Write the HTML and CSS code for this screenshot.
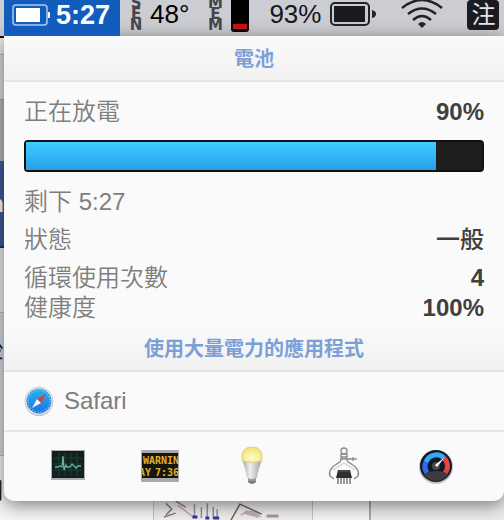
FILE: index.html
```html
<!DOCTYPE html>
<html lang="zh-Hant">
<head>
    <meta charset="UTF-8">
    <meta name="viewport" content="width=device-width, initial-scale=1.0">
    <title>電池</title>
    <link rel="stylesheet" href="styles.css">
</head>
<body>
    <!-- Windows behind the menu -->
    <div class="desktop" aria-hidden="true">
        <div class="band band-title"></div>
        <div class="band band-tabs"></div>
        <div class="band band-toolbar"></div>
        <div class="band band-blue"><span>n</span></div>
        <div class="band band-light"></div>
        <div class="band band-side"><span>後</span></div>
        <div class="band band-page">
            <span>用</span>
            <svg class="figure" viewBox="0 0 160 65" preserveAspectRatio="xMidYMax slice">
                <g fill="none" stroke-width="1.5">
                    <path d="M12 48l6 6-6 6M10 62l12-4M22 46l10 6" stroke="#8c7c84"/>
                    <path d="M24 50l16 12M88 60q10-8 20 2" stroke="#c9a9b1"/>
                    <path d="M41 49v14M48 52v11M54 48v16M60 52v12M64 54v10" stroke="#8f90ac"/>
                    <path d="M39 62h5M52 63h4M60 63h6" stroke="#3434a0" stroke-width="3"/>
                    <path d="M78 65l9-16 22 10" stroke="#705f5f"/>
                    <path d="M92 57l14 4" stroke="#c4b0b4" stroke-width="4"/>
                    <path d="M114 61h12" stroke="#a09a9c" stroke-width="3"/>
                </g>
            </svg>
        </div>
    </div>

    <header class="menubar">
        <button class="menu-item active" type="button">
            <svg width="38" height="22" viewBox="0 0 38 22" aria-hidden="true">
                <rect x="1" y="1" width="34" height="20" rx="3" fill="none" stroke="#a8cbf2" stroke-width="1.5"/>
                <rect x="4" y="4" width="24" height="14" fill="#fff"/>
                <path d="M36 8h1q1 0 1 1v4q0 1-1 1h-1z" fill="#fff"/>
            </svg>
            <span>5:27</span>
        </button>
        <div class="menu-item sensor">
            <span class="stack">S<br>E<br>N</span>
            <span>48°</span>
        </div>
        <div class="menu-item memory">
            <span class="stack">M<br>E<br>M</span>
            <span class="mem-gauge"></span>
        </div>
        <div class="menu-item charge">
            <span>93%</span>
            <svg width="46" height="24" viewBox="0 0 46 24" aria-hidden="true">
                <rect x="1" y="1" width="38" height="22" rx="4" fill="none" stroke="#222327" stroke-width="2"/>
                <rect x="4" y="4" width="31" height="16" fill="#1a1b20"/>
                <path d="M42 8q4 1 4 4t-4 4z" fill="#222327"/>
            </svg>
        </div>
        <div class="menu-item">
            <svg width="42" height="30" viewBox="0 0 42 30" aria-hidden="true">
                <g fill="none" stroke="#222327" stroke-width="2.5">
                    <path d="M1 9Q21-7 41 9"/>
                    <path d="M7 15Q21 4 35 15"/>
                    <path d="M12 21Q21 13 30 21"/>
                </g>
                <path d="M17 25q4-4 8 0l-4 4z" fill="#222327"/>
            </svg>
        </div>
        <div class="menu-item input-source">注</div>
    </header>

    <main class="panel">
        <h1 class="section-title">電池</h1>
        <section class="details">
            <dl class="row row-main">
                <dt>正在放電</dt>
                <dd>90%</dd>
            </dl>
            <div class="bar" role="progressbar" aria-label="電池" aria-valuenow="90" aria-valuemin="0" aria-valuemax="100">
                <div class="bar-fill" style="width: 90%"></div>
            </div>
            <p class="row remaining">剩下 5:27</p>
            <dl class="row">
                <dt>狀態</dt>
                <dd class="state">一般</dd>
            </dl>
            <div class="health">
                <dl class="row row-tight">
                    <dt>循環使用次數</dt>
                    <dd>4</dd>
                </dl>
                <dl class="row row-tight">
                    <dt>健康度</dt>
                    <dd>100%</dd>
                </dl>
            </div>
        </section>

        <h2 class="section-title">使用大量電力的應用程式</h2>
        <div class="app">
            <svg width="30" height="30" viewBox="0 0 30 30" aria-hidden="true">
                <defs>
                    <linearGradient id="compass" x2="0" y2="1">
                        <stop offset="0" stop-color="#2bb4f2"/>
                        <stop offset="1" stop-color="#1c72dd"/>
                    </linearGradient>
                </defs>
                <circle cx="15" cy="16" r="14" fill="#b4b4b6"/>
                <circle cx="15" cy="15" r="14" fill="#ececee" stroke="#cfcfd1"/>
                <circle cx="15" cy="15" r="12.5" fill="url(#compass)"/>
                <circle cx="15" cy="15" r="11" fill="none" stroke="#8fcbf5" stroke-width="1.5" stroke-dasharray="1 1.9"/>
                <path d="M22 8l-9 5 4 4z" fill="#e23b36"/>
                <path d="M8 22l5-9 4 4z" fill="#f5f5f5"/>
            </svg>
            <span>Safari</span>
        </div>

        <nav class="tools">
            <button type="button" aria-label="Activity Monitor">
                <svg width="40" height="40" viewBox="0 0 40 40">
                    <rect x="3" y="5" width="34" height="30" fill="#a9afaf"/>
                    <rect x="4" y="6" width="32" height="27" fill="#161c1d"/>
                    <rect x="6" y="8" width="28" height="23" fill="#11231f"/>
                    <path d="M11 8v23M17 8v23M23 8v23M29 8v23M6 13h28M6 19h28M6 25h28" stroke="#203d37"/>
                    <path d="M7 22h3l2-1 2 1 1-11 1 14 2-5 1 2h3l2-3 2 2 2 2 2-2h3" fill="none" stroke="#5fb5a0" stroke-width="1.3"/>
                </svg>
            </button>
            <button type="button" aria-label="Console">
                <svg width="40" height="40" viewBox="0 0 40 40">
                    <defs>
                        <clipPath id="led"><rect x="2" y="7" width="36" height="27"/></clipPath>
                    </defs>
                    <rect x="1" y="5" width="38" height="32" rx="1" fill="#aaa9ad"/>
                    <rect x="2" y="8" width="36" height="25" fill="#17150f"/>
                    <g class="led-text" clip-path="url(#led)">
                        <text x="3" y="19">WARNIN</text>
                        <text x="-1" y="31">AY</text>
                        <text x="15" y="31">7:36</text>
                    </g>
                </svg>
            </button>
            <button type="button" aria-label="Energy Saver">
                <svg width="40" height="40" viewBox="0 0 40 40">
                    <defs>
                        <radialGradient id="glow" cy=".65">
                            <stop offset="0" stop-color="#fffcd0"/>
                            <stop offset="1" stop-color="#f5e77c"/>
                        </radialGradient>
                        <linearGradient id="metal">
                            <stop offset="0" stop-color="#a2a5ab"/>
                            <stop offset=".4" stop-color="#eeeef0"/>
                            <stop offset="1" stop-color="#9ea1a7"/>
                        </linearGradient>
                    </defs>
                    <path d="M16 31h8v6q-4 4-8 0z" fill="#777c83"/>
                    <path d="M16 35h8" stroke="#b6bac0"/>
                    <path d="M10 15q3 7 5 18 5 2 10 0 2-11 5-18z" fill="url(#metal)"/>
                    <path d="M10 16Q8 2 20 2t10 14q-10 3-20 0z" fill="url(#glow)" stroke="#d3c287" stroke-width=".7"/>
                </svg>
            </button>
            <button type="button" aria-label="System Information">
                <svg width="40" height="40" viewBox="0 0 40 40">
                    <g fill="none" stroke="#8a8a8c" stroke-width="1.3">
                        <circle cx="20" cy="6" r="3"/>
                        <path d="M17 9h6v3h-6zM18 12l-2 5Q3 24 6 31l4 3M22 12l2 5q13 7 10 14l-4 3M16 14h17M29 12v4"/>
                        <path d="M9 25l11-7 11 7" stroke="#d2d2d3"/>
                    </g>
                    <path d="M14 25h12l2 8H12z" fill="#2d2d2f"/>
                    <path d="M15 26h10" stroke="#626264"/>
                    <path d="M14 33v6M17 33v6M20 33v6M23 33v6M26 33v6" stroke="#777779" stroke-width="1.5"/>
                </svg>
            </button>
            <button type="button" aria-label="iStat Menus">
                <svg width="40" height="40" viewBox="0 0 40 40">
                    <defs>
                        <clipPath id="dial"><circle cx="20" cy="21" r="15"/></clipPath>
                    </defs>
                    <circle cx="20" cy="22" r="17" fill="#c3c3c6"/>
                    <circle cx="20" cy="21" r="16" fill="#14182b"/>
                    <g fill="none" stroke-width="5">
                        <path d="M11 28A11 11 0 0 1 10 17" stroke="#3269f0"/>
                        <path d="M10 17A11 11 0 0 1 28 13" stroke="#35a9f5"/>
                        <path d="M28 13A11 11 0 0 1 29 28" stroke="#e8433d"/>
                    </g>
                    <ellipse cx="20" cy="34" rx="15" ry="8" fill="#3d3d40" clip-path="url(#dial)"/>
                    <circle cx="20" cy="21" r="4" fill="#4b4a48"/>
                    <path d="M19 20l10-8-8 10z" fill="#fff"/>
                </svg>
            </button>
        </nav>
    </main>
</body>
</html>
```
FILE: styles.css
```css
* { box-sizing: border-box; }
body {
    margin: 0;
    min-height: 100vh;
    position: relative;
    overflow: hidden;
    font-family: "Liberation Sans", "Noto Sans CJK TC", sans-serif;
    font-size: 24px;
    color: #7e7e7e;
}
h1, h2, p, dl, dd { margin: 0; }
button {
    border: none;
    padding: 0;
    background: none;
    font: inherit;
    cursor: pointer;
}
svg { display: block; flex: none; }

/* desktop behind the panel */
.desktop {
    position: absolute;
    inset: 0;
    z-index: -1;
    display: flex;
    flex-direction: column;
    padding-top: 36px;
    background: #e2e2e2;
    color: #222;
}
.band { overflow: hidden; display: flex; align-items: center; }
.band span { width: 4px; display: flex; justify-content: flex-end; }
.band-title { height: 18px; background: #ececec; border-top: 2px solid #111; }
.band-tabs { height: 45px; background: #dcdcdc; border-top: 1px solid #bbb; }
.band-toolbar { height: 62px; background: #bab7b7; border-top: 1px solid #999; }
.band-blue { height: 87px; background: #3f5c9a; border-bottom: 2px solid #1d2e5c; color: #fff; font-weight: bold; }
.band-light { height: 64px; background: #ebebeb; }
.band-side { height: 143px; background: #d9dbe2; border-top: 1px solid #bbb; align-items: flex-start; padding-top: 16px; }
.band-page {
    flex: 1;
    background: linear-gradient(90deg, #f6f6f6 369px, #aaa 369px, #aaa 371px, #ececec 371px);
    border-top: 1px solid #bbb;
}
.figure {
    width: 160px;
    height: 100%;
    margin-left: 149px;
    background: #f1eeee;
    border: solid #c4c4c4;
    border-width: 0 1px;
}

/* menu bar */
.menubar {
    display: flex;
    height: 36px;
    padding-left: 4px;
    background: #cccdd2;
    color: #16171b;
    font-size: 26px;
    line-height: 28px;
    overflow: hidden;
}
.menu-item {
    display: flex;
    align-items: center;
    height: 28px;
}
.menu-item.active {
    height: 36px;
    padding: 0 10px 6px 8px;
    gap: 6px;
    background: #125dbb;
    color: #fff;
    font-size: 27px;
    font-weight: bold;
}
.sensor { margin-left: 8px; gap: 6px; color: #000; }
.memory { margin-left: 18px; gap: 8px; }
.charge { margin-left: 20px; gap: 9px; margin-right: 25px; }
.stack {
    width: 16px;
    font: bold 15px/11px "DejaVu Sans", sans-serif;
    text-align: center;
    color: #45464a;
}
.mem-gauge {
    width: 18px;
    height: 32px;
    margin-top: 4px;
    background: #c60d12;
    border: solid #000;
    border-width: 24px 2px 3px;
    border-radius: 0 0 3px 3px;
}
.input-source {
    justify-content: center;
    width: 32px;
    height: 30px;
    margin-left: 24px;
    border-radius: 4px;
    background: #1a1b20;
    color: #e4e4e8;
    font-size: 24px;
}

/* battery panel */
.panel {
    margin-left: 4px;
    background: #fafafa;
    border-radius: 0 0 10px 10px;
    box-shadow: 0 4px 18px rgba(0,0,0,0.5);
    overflow: hidden;
}
.section-title {
    height: 46px;
    border-bottom: 2px solid #e5e5e5;
    background: linear-gradient(#fafafa, #f1f1f1);
    color: #7b9fd6;
    font-size: 20px;
    font-weight: bold;
    line-height: 46px;
    text-align: center;
}
.details { padding: 0 20px 3px; }
.row {
    display: flex;
    justify-content: space-between;
    align-items: center;
    height: 38px;
    line-height: 30px;
    font-weight: 350;
}
.row dd { color: #404040; font-weight: bold; }
.row .state { font-weight: 500; }
.row-main { height: 58px; padding-top: 2px; }
.row-tight { height: 30px; }
.remaining { margin-top: 11px; }
.health { margin-top: 4px; }
.bar {
    height: 32px;
    border: 2px solid #111;
    border-radius: 4px;
    background: #1e1e1e;
}
.bar-fill {
    height: 100%;
    background: linear-gradient(#3fcdff, #35b5f9 50%, #289fe6);
}
.app {
    display: flex;
    align-items: center;
    gap: 10px;
    height: 60px;
    padding: 0 20px;
    border-bottom: 2px solid #e5e5e5;
}
.tools {
    display: grid;
    grid-template-columns: repeat(5, 1fr);
    justify-items: center;
    padding: 13px 22px 16px 18px;
}
.led-text {
    font: bold 10px "DejaVu Sans Mono", monospace;
    fill: #e0b32c;
}
```
